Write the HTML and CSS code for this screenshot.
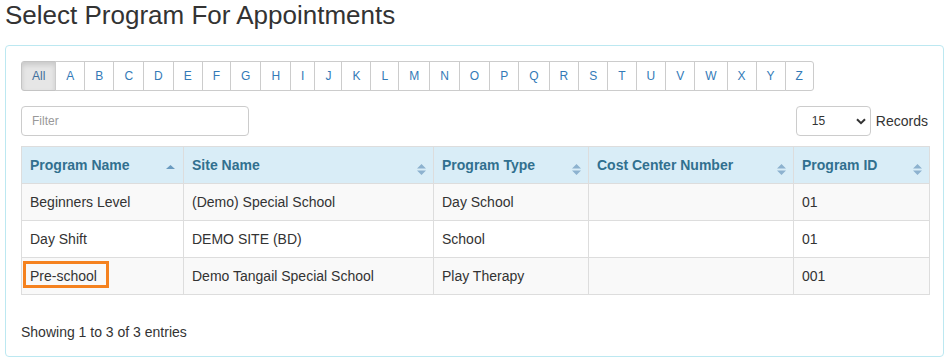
FILE: index.html
```html
<!DOCTYPE html>
<html>
<head>
<meta charset="utf-8">
<link rel="stylesheet" href="styles.css">
</head>
<body>
<h3 class="page-title">Select Program For Appointments</h3>
<div class="panel">
  <ul class="alpha">
    <li class="active">All</li><li>A</li><li>B</li><li>C</li><li>D</li><li>E</li><li>F</li><li>G</li><li>H</li><li>I</li><li>J</li><li>K</li><li>L</li><li>M</li><li>N</li><li>O</li><li>P</li><li>Q</li><li>R</li><li>S</li><li>T</li><li>U</li><li>V</li><li>W</li><li>X</li><li>Y</li><li>Z</li>
  </ul>
  <div class="toolbar">
    <input class="filter" type="text" placeholder="Filter">
    <div class="length">
      <div class="select-wrap">
        <select class="select"><option>15</option></select>
        <svg class="chev" width="10" height="7" viewBox="0 0 10 7"><path d="M1 1.2 L5 5.2 L9 1.2" fill="none" stroke="#333" stroke-width="2"/></svg>
      </div>
      <span class="records">Records</span>
    </div>
  </div>
  <table class="grid">
    <colgroup>
      <col class="c1"><col class="c2"><col class="c3"><col class="c4"><col class="c5">
    </colgroup>
    <thead>
      <tr>
        <th>Program Name<svg class="sort-asc" width="9" height="4" viewBox="0 0 9 4"><path d="M0 4 L4.5 0 L9 4 Z" fill="#6a9bc0"/></svg></th>
        <th>Site Name<svg class="sort-both" width="9" height="11" viewBox="0 0 9 11"><path d="M0 4.5 L4.5 0 L9 4.5 Z M0 6.5 L4.5 11 L9 6.5 Z" fill="#8db2cf"/></svg></th>
        <th>Program Type<svg class="sort-both" width="9" height="11" viewBox="0 0 9 11"><path d="M0 4.5 L4.5 0 L9 4.5 Z M0 6.5 L4.5 11 L9 6.5 Z" fill="#8db2cf"/></svg></th>
        <th>Cost Center Number<svg class="sort-both" width="9" height="11" viewBox="0 0 9 11"><path d="M0 4.5 L4.5 0 L9 4.5 Z M0 6.5 L4.5 11 L9 6.5 Z" fill="#8db2cf"/></svg></th>
        <th>Program ID<svg class="sort-both" width="9" height="11" viewBox="0 0 9 11"><path d="M0 4.5 L4.5 0 L9 4.5 Z M0 6.5 L4.5 11 L9 6.5 Z" fill="#8db2cf"/></svg></th>
      </tr>
    </thead>
    <tbody>
      <tr><td>Beginners Level</td><td>(Demo) Special School</td><td>Day School</td><td></td><td>01</td></tr>
      <tr><td>Day Shift</td><td>DEMO SITE (BD)</td><td>School</td><td></td><td>01</td></tr>
      <tr><td><span class="mark">Pre-school</span></td><td>Demo Tangail Special School</td><td>Play Therapy</td><td></td><td>001</td></tr>
    </tbody>
  </table>
  <div class="info">Showing 1 to 3 of 3 entries</div>
</div>
</body>
</html>
```
FILE: styles.css
```css
* { box-sizing: border-box; }
body {
  margin: 0;
  padding: 0 6px 0 5px;
  font-family: "Liberation Sans", Arial, sans-serif;
  font-size: 14px;
  color: #333;
  background: #fff;
}
.page-title {
  margin: 2px 0 17px;
  font-size: 26px;
  font-weight: 400;
  line-height: 26px;
  color: #333;
}
.panel {
  border: 1px solid #bce8f1;
  border-radius: 4px;
  padding: 15px 15px 14px;
}
.alpha {
  display: flex;
  list-style: none;
  margin: 0;
  padding: 0;
}
.alpha li {
  font-size: 12px;
  line-height: 18px;
  padding: 5px 10px;
  border: 1px solid #ccc;
  margin-left: -1px;
  color: #337ab7;
  background: #fff;
}
.alpha li:first-child {
  margin-left: 0;
  border-radius: 3px 0 0 3px;
}
.alpha li:last-child { border-radius: 0 3px 3px 0; }
.alpha li.active {
  background: #e6e6e6;
  border-color: #c4c4c4;
  box-shadow: inset 0 3px 5px rgba(0,0,0,.125);
  color: #3f6f9c;
}
.toolbar {
  display: flex;
  justify-content: space-between;
  align-items: center;
  margin-top: 15px;
  margin-bottom: 10px;
}
.filter {
  width: 228px;
  height: 30px;
  border: 1px solid #ccc;
  border-radius: 4px;
  padding: 5px 10px;
  font-family: "Liberation Sans", Arial, sans-serif;
  font-size: 12px;
  color: #555;
}
.filter::placeholder { color: #999; }
.length {
  display: flex;
  align-items: center;
  gap: 5px;
}
.select-wrap { position: relative; }
.select {
  -webkit-appearance: none;
  appearance: none;
  width: 75px;
  height: 30px;
  border: 1px solid #ccc;
  border-radius: 4px;
  background: #fff;
  padding: 0 0 0 15px;
  font-family: "Liberation Sans", Arial, sans-serif;
  font-size: 12px;
  color: #333;
}
.chev {
  position: absolute;
  right: 5px;
  top: 12px;
  pointer-events: none;
}
.records { font-size: 14px; color: #333; }
.grid {
  width: 908px;
  table-layout: fixed;
  border-collapse: collapse;
  border: 1px solid #ddd;
}
.c1 { width: 162px; }
.c2 { width: 250px; }
.c3 { width: 155px; }
.c4 { width: 205px; }
.c5 { width: 136px; }
.grid th, .grid td {
  border: 1px solid #ddd;
  padding: 8px;
  line-height: 20px;
  text-align: left;
  vertical-align: top;
}
.grid th {
  position: relative;
  background: #d9edf7;
  color: #31708f;
  font-weight: 700;
}
.grid tbody tr:nth-child(odd) td { background: #f9f9f9; }
.grid tbody tr:nth-child(even) td { background: #fff; }
.sort-asc {
  position: absolute;
  right: 8px;
  top: 18px;
}
.sort-both {
  position: absolute;
  right: 7px;
  top: 17px;
}
.mark {
  outline: 3px solid #f5821f;
  padding: 4px 9px 1px 4px;
  margin-left: -4px;
}
.info {
  margin-top: 27px;
  line-height: 20px;
}
```
